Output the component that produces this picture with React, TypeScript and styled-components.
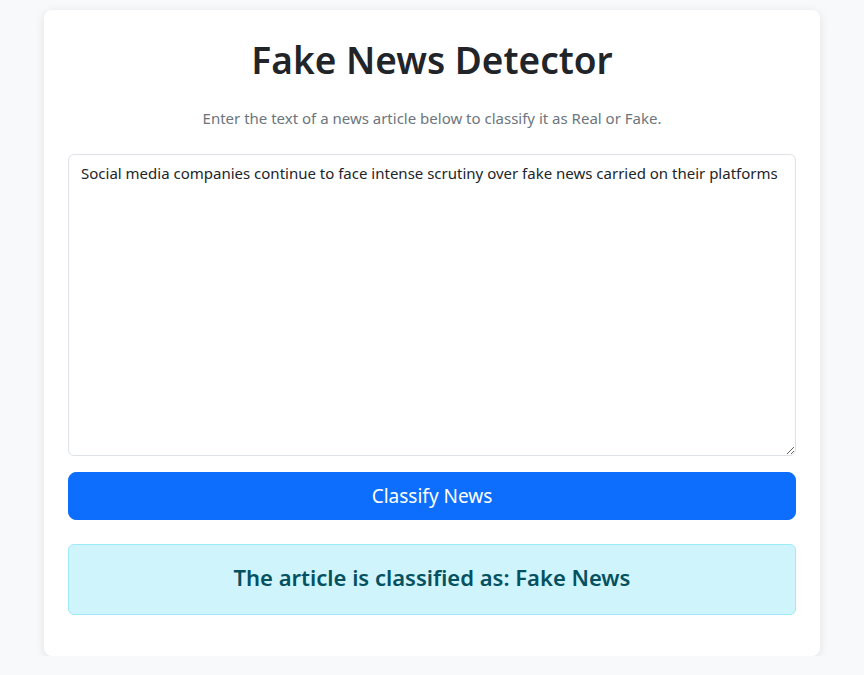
import React, { useState } from "react";
import styled, { createGlobalStyle } from "styled-components";

const GlobalStyle = createGlobalStyle`
  *, *::before, *::after { box-sizing: border-box; }
  body {
    margin: 0;
    background: #f8f9fa;
    font-family: "Noto Sans", "Open Sans", sans-serif;
    color: #212529;
    font-size: 16px;
    line-height: 1.5;
  }
`;

const Card = styled.main`
  width: 776px;
  margin: 10px auto 0;
  background: #ffffff;
  border-radius: 8px;
  box-shadow: 0 2px 10px rgba(0, 0, 0, 0.1);
  padding: 24px;
  display: flex;
  flex-direction: column;
`;

const Title = styled.h1`
  margin: 2px 0 22px;
  font-size: 37px;
  font-weight: 600;
  line-height: 48px;
  text-align: center;
  color: #212529;
`;

const Subtitle = styled.p`
  margin: 0 0 24px;
  text-align: center;
  color: #6c757d;
  font-size: 15px;
  line-height: 24px;
`;

const TextArea = styled.textarea`
  display: block;
  width: 100%;
  padding: 6px 12px;
  font: inherit;
  font-size: 15px;
  line-height: 24px;
  color: #212529;
  background: #fff;
  border: 1px solid #dee2e6;
  border-radius: 6px;
  resize: vertical;
  outline: none;
`;

const Button = styled.button`
  margin-top: 16px;
  width: 100%;
  height: 48px;
  padding: 8px 16px;
  font: inherit;
  font-size: 19px;
  line-height: 30px;
  color: #fff;
  background: #0d6efd;
  border: 1px solid #0d6efd;
  border-radius: 8px;
  cursor: pointer;
`;

const Alert = styled.div`
  margin: 24px 0 17px;
  padding: 16px;
  background: #cff4fc;
  border: 1px solid #9eeaf9;
  border-radius: 6px;
  color: #055160;
`;

const Result = styled.h4`
  margin: 0 0 6px;
  padding-top: 2px;
  font-size: 22px;
  font-weight: 600;
  line-height: 29px;
  text-align: center;
`;

export default function App() {
  const [text, setText] = useState(
    "Social media companies continue to face intense scrutiny over fake news carried on their platforms"
  );
  return (
    <>
      <GlobalStyle />
      <Card>
        <Title>Fake News Detector</Title>
        <Subtitle>Enter the text of a news article below to classify it as Real or Fake.</Subtitle>
        <TextArea rows={12} value={text} onChange={(e) => setText(e.target.value)} />
        <Button>Classify News</Button>
        <Alert>
          <Result>The article is classified as: Fake News</Result>
        </Alert>
      </Card>
    </>
  );
}
